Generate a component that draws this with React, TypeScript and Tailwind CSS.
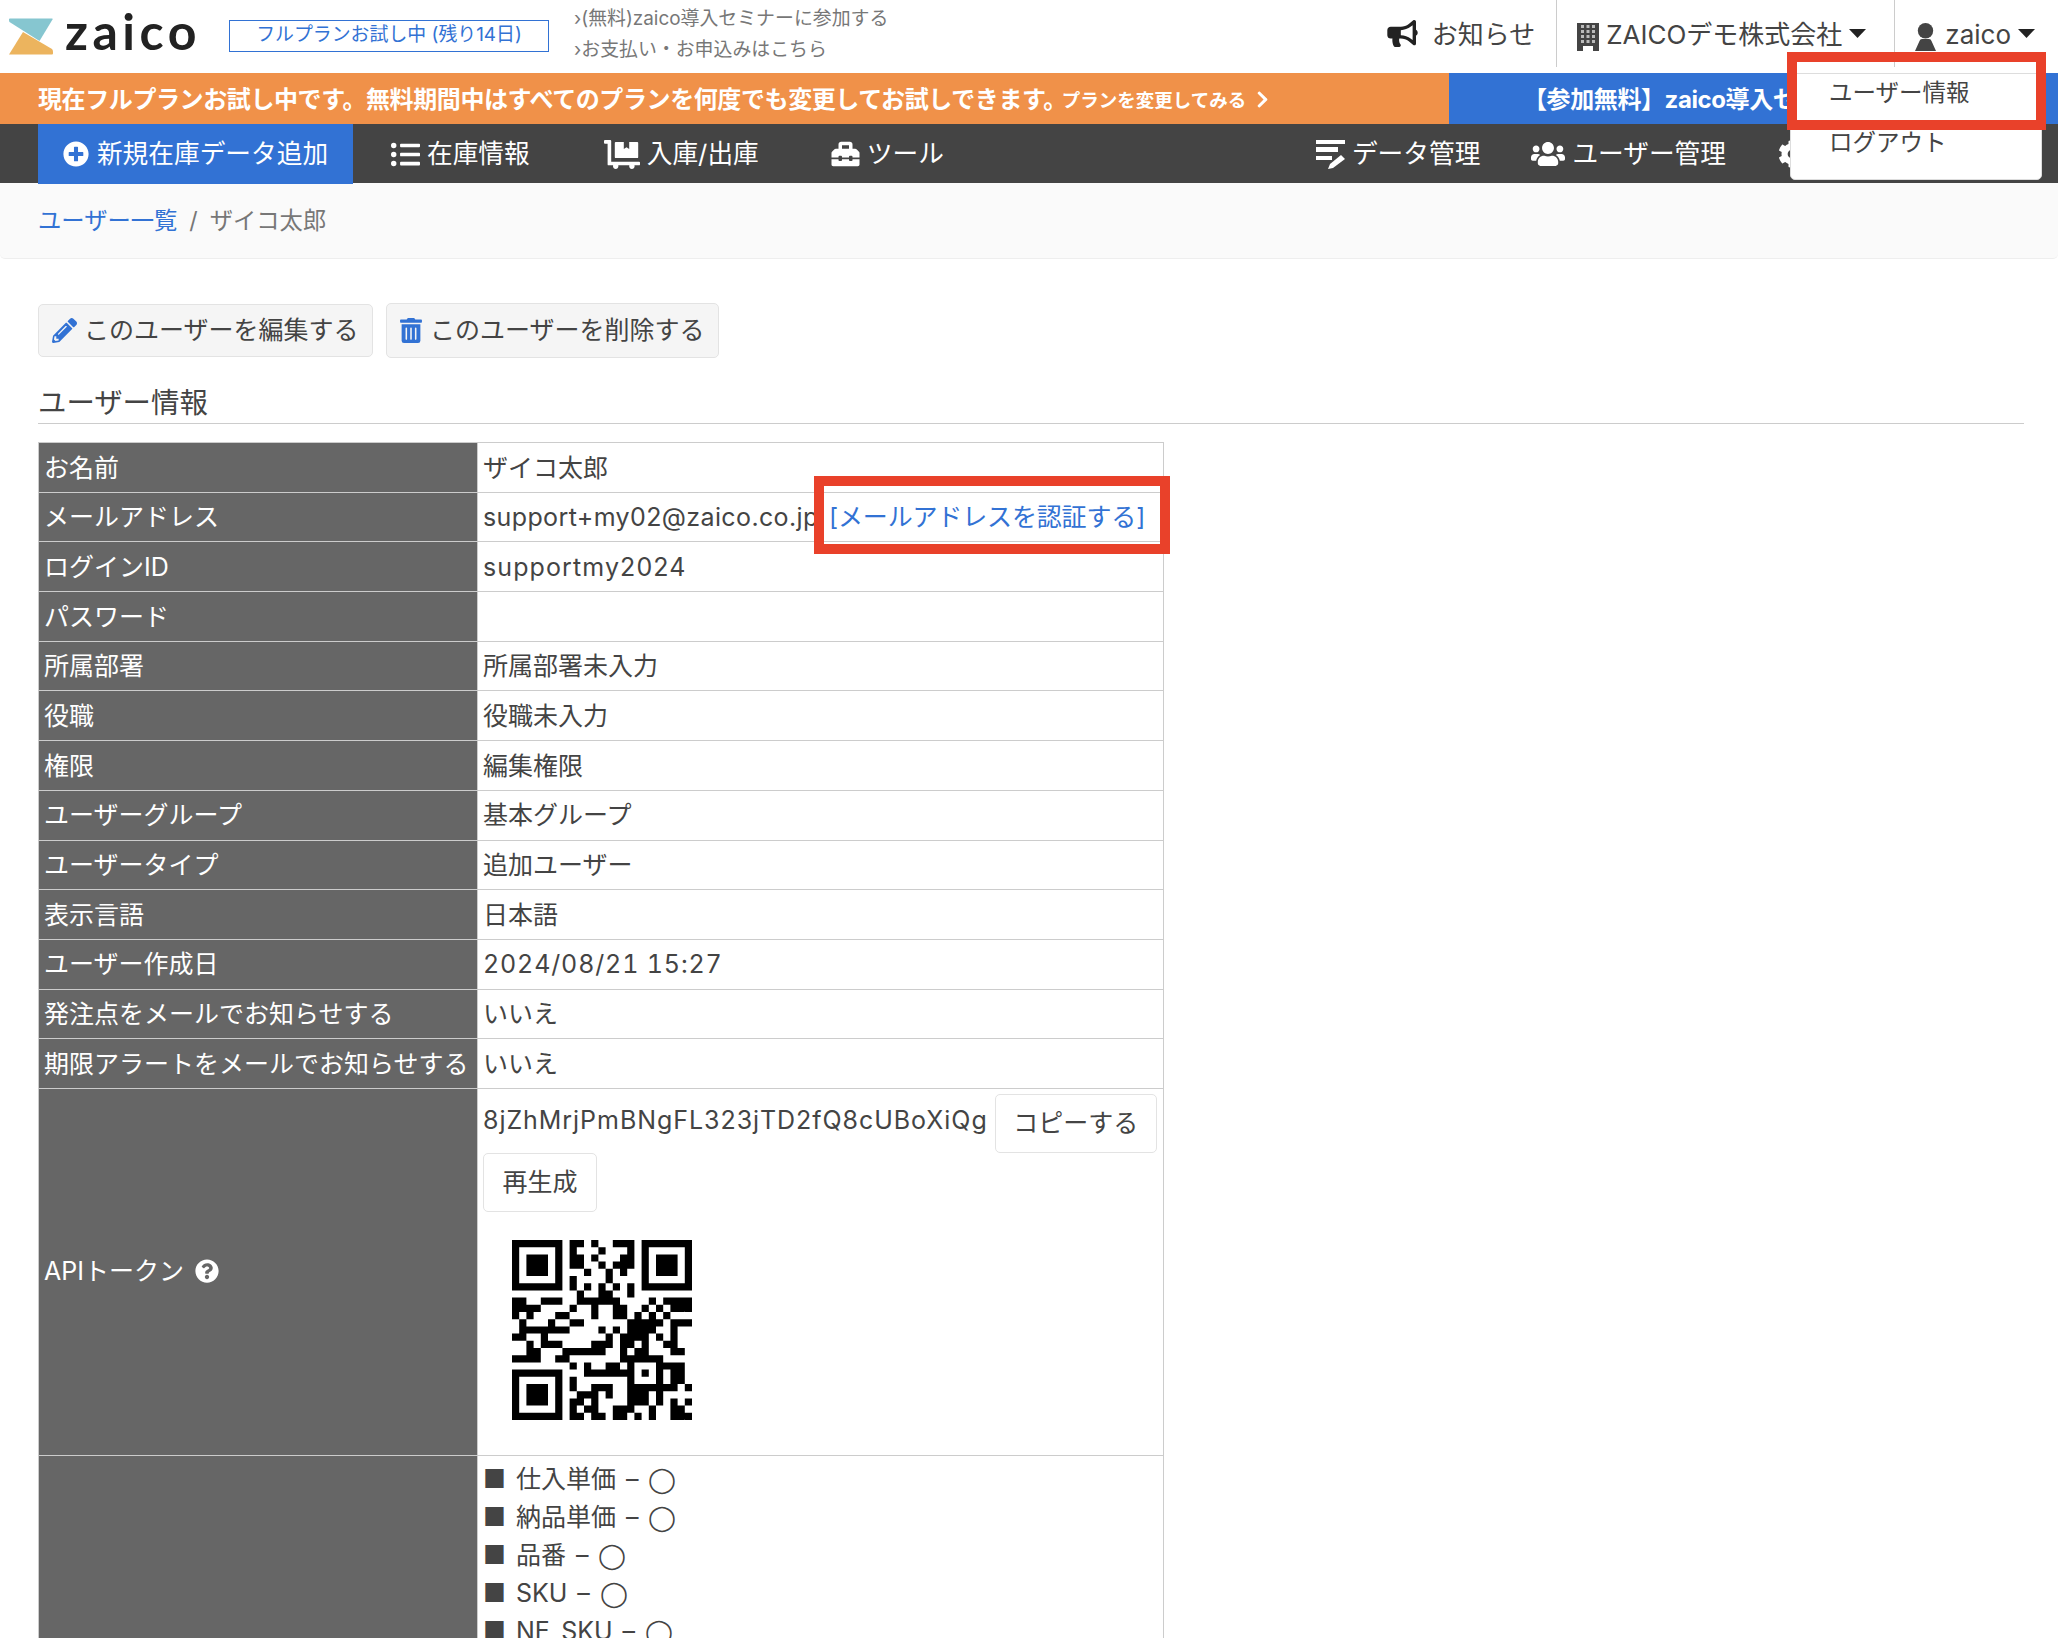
import React from "react";
import {
  FaBullhorn,
  FaChevronRight,
  FaCog,
  FaDollyFlatbed,
  FaListUl,
  FaPencilAlt,
  FaPlusCircle,
  FaQuestionCircle,
  FaToolbox,
  FaTrashAlt,
  FaUsers,
} from "react-icons/fa";

const qrRows = [
  "#######.##.#..###.#######",
  "#.....#.#...#...#.#.....#",
  "#.###.#.##.#...##.#.###.#",
  "#.###.#.##..#.###.#.###.#",
  "#.###.#...#..#.#..#.###.#",
  "#.....#.#....#....#.....#",
  "#######.#.#.#.#.#.#######",
  ".........#..##..#........",
  "##..###..######....#.####",
  "####....#..#..##..#.#.###",
  "#.#...##...#..##.#.#.#...",
  ".#...#..##......#####.###",
  ".#######....#.#.####..#..",
  "##..#........#.####.#.#..",
  "..#.###....###.##.#..##..",
  "..##...######..#.##...##.",
  "####..##.......######....",
  "........#.#..##.#...####.",
  "#######...#######.#.#.##.",
  "#.....#.#.......#...#.##.",
  "#.###.#.#..###..#######.#",
  "#.###.#..###.#..###.#....",
  "#.###.#.##.#....###.#.#.#",
  "#.....#.#.##..###..#..##.",
  "#######.##.##.##.#.#..###",
];

const qrPath = qrRows
  .flatMap((row, y) =>
    row.split("").map((c, x) => (c === "#" ? `M${x} ${y}h1v1h-1z` : "")),
  )
  .join("");

const infoRows = [
  ["お名前", "ザイコ太郎", ""],
  ["メールアドレス", "email", ""],
  ["ログインID", "supportmy2024", "tracking-[1.100px]"],
  ["パスワード", "", ""],
  ["所属部署", "所属部署未入力", ""],
  ["役職", "役職未入力", ""],
  ["権限", "編集権限", ""],
  ["ユーザーグループ", "基本グループ", ""],
  ["ユーザータイプ", "追加ユーザー", ""],
  ["表示言語", "日本語", ""],
  ["ユーザー作成日", "2024/08/21 15:27", "tabular-nums tracking-[0.850px]"],
  ["発注点をメールでお知らせする", "いいえ", ""],
  ["期限アラートをメールでお知らせする", "いいえ", ""],
];

const permissions = ["仕入単価", "納品単価", "品番", "SKU", "NE_SKU"];

function Logo() {
  return (
    <div className="ml-[9px] flex items-center">
      <svg width="44" height="37" viewBox="0 0 44 37">
        <path d="M1 .5h42q1 0 .5 1L30.5 23 .5 4Q0 3.5 0 2V1q0-.5 1-.5z" fill="#86c6d0" />
        <path d="M14 14l29 17q1 1 1 3v1.500q0 1-1 1H0z" fill="#ecb45e" />
      </svg>
      <span className="-mt-[12px] ml-[12px] w-[132px] text-[50px] leading-none font-bold tracking-[4.500px] text-[#222] [font-family:Lato,sans-serif]">
        zaico
      </span>
    </div>
  );
}

function PersonIcon() {
  return (
    <svg className="mt-[7px]" width="21" height="28" viewBox="0 0 21 28" fill="#444">
      <circle cx="10.500" cy="7.700" r="7.700" />
      <path d="M7 16h7q2 0 2.500 2L21 28H0l4.500-10Q5 16 7 16z" />
    </svg>
  );
}

function BuildingIcon() {
  const windows = [2, 7, 12, 17];
  return (
    <svg className="mt-[7px]" width="22" height="28" viewBox="0 0 22 28">
      <path d="M0 0h22v28h-6v-5H6v5H0z" fill="#444" />
      <g fill="#bbb">
        {windows.map((y) => (
          <React.Fragment key={y}>
            <rect x="4" y={y} width="3" height="3" />
            <rect x="9.500" y={y} width="3" height="3" />
            <rect x="15" y={y} width="3" height="3" />
          </React.Fragment>
        ))}
      </g>
    </svg>
  );
}

function Caret() {
  return (
    <svg className="ml-[7px]" width="17" height="9" viewBox="0 0 17 9" fill="#222">
      <path d="M0 0h17l-8.500 9z" />
    </svg>
  );
}

function DataIcon() {
  return (
    <svg width="29" height="30" viewBox="0 0 29 30" fill="#fff">
      <rect x="0" y="1" width="29" height="4" />
      <rect x="0" y="8" width="22" height="5" />
      <rect x="0" y="17" width="16" height="4" />
      <path d="M25 16l4 4-12 9-5 1 2-5z" />
    </svg>
  );
}

function NavItem({ icon, label, className }: { icon: React.ReactNode; label: string; className: string }) {
  return (
    <div className={`mt-[1px] flex items-center gap-[7px] ${className}`}>
      {icon}
      <span>{label}</span>
    </div>
  );
}

export default function App() {
  return (
    <div className="relative h-[1638px] w-[2058px] overflow-hidden bg-white text-[25px] leading-[1.5] text-[#444] [font-family:Inter,'Noto_Sans_CJK_JP',sans-serif]">
      {/* Header */}
      <header className="flex h-[73px] items-center">
        <Logo />
        <div className="-mt-[2px] ml-[32px] flex h-[32px] w-[320px] items-center justify-center border border-[#3272d4] text-[18.900px] leading-none text-[#3272d4]">
          フルプランお試し中 (残り14日)
        </div>
        <div className="-mt-[6px] ml-[25px] flex flex-col gap-[12px] text-[18.900px] leading-[19px] text-[#777]">
          <span>›(無料)zaico導入セミナーに参加する</span>
          <span>›お支払い・お申込みはこちら</span>
        </div>
        <div className="mr-[23px] ml-auto flex h-full items-start text-[26px]">
          <div className="flex h-[67px] items-center gap-[14px] pr-[21px]">
            <FaBullhorn className="h-[27px] w-[31px] text-[#222]" />
            <span className="mt-[2px]">お知らせ</span>
          </div>
          <div className="flex h-[67px] items-center border-l border-[#ccc] pr-[28px] pl-[20px]">
            <BuildingIcon />
            <span className="mt-[2px] ml-[7px]">ZAICOデモ株式会社</span>
            <Caret />
          </div>
          <div className="flex h-[67px] items-center border-l border-[#ccc] pl-[20px]">
            <PersonIcon />
            <span className="mt-[2px] ml-[9px]">zaico</span>
            <Caret />
          </div>
        </div>
      </header>

      {/* Banners */}
      <div className="flex h-[51px] font-bold text-white">
        <div className="flex w-[1449px] items-center bg-[#f09149] pt-[2px] pl-[38px] text-[24px] tracking-[-0.400px]">
          <span>現在フルプランお試し中です。無料期間中はすべてのプランを何度でも変更してお試しできます。</span>
          <span className="mt-[2px] -ml-[5px] text-[18.500px] tracking-normal">プランを変更してみる</span>
          <FaChevronRight className="ml-[10px] h-[19px] w-[13px]" />
        </div>
        <div className="flex flex-1 items-center bg-[#3272d4] pt-[2px] pl-[74px] text-[24px] tracking-[-0.400px]">【参加無料】zaico導入セミナー</div>
      </div>

      {/* Nav */}
      <nav className="flex h-[59px] bg-[#444] text-[25.700px] text-white">
        <div className="ml-[38px] flex h-[60px] w-[315px] items-center justify-center gap-[8px] bg-[#3272d4]">
          <FaPlusCircle className="h-[26px] w-[26px]" />
          <span>新規在庫データ追加</span>
        </div>
        <NavItem className="ml-[38px]" icon={<FaListUl className="h-[29px] w-[29px]" />} label="在庫情報" />
        <NavItem className="ml-[74px]" icon={<FaDollyFlatbed className="h-[29px] w-[36px]" />} label="入庫/出庫" />
        <NavItem className="ml-[72px]" icon={<FaToolbox className="h-[28px] w-[29px]" />} label="ツール" />
        <div className="mr-[252px] ml-auto flex items-center">
          <NavItem className="" icon={<DataIcon />} label="データ管理" />
          <NavItem className="ml-[51px]" icon={<FaUsers className="h-[28px] w-[34px]" />} label="ユーザー管理" />
          <FaCog className="ml-[52px] h-[28px] w-[28px]" />
        </div>
      </nav>

      {/* Breadcrumb */}
      <div className="flex h-[76px] items-center gap-[12px] rounded-b-[5px] border-b border-[#eee] bg-[#fafafa] px-[38px] pt-[2px] text-[23.300px] text-[#777]">
        <span className="text-[#3272d4]">ユーザー一覧</span>
        <span>/</span>
        <span>ザイコ太郎</span>
      </div>

      <main className="pr-[34px] pl-[38px]">
        <div className="mt-[44px] flex items-center gap-[13px]">
          <button className="flex h-[53px] w-[335px] items-center gap-[7px] rounded-[5px] border border-[#e3e3e3] bg-[#f5f5f5] pl-[13px]">
            <FaPencilAlt className="h-[25px] w-[25px] text-[#3272d4]" />
            <span>このユーザーを編集する</span>
          </button>
          <button className="flex h-[55px] w-[333px] items-center gap-[8px] rounded-[5px] border border-[#e3e3e3] bg-[#f5f5f5] pl-[13px]">
            <FaTrashAlt className="h-[25px] w-[22px] text-[#3272d4]" />
            <span>このユーザーを削除する</span>
          </button>
        </div>

        <h2 className="mt-[23px] h-[43px] border-b border-[#ccc] text-[28.400px] leading-[44px]">ユーザー情報</h2>

        <table className="mt-[18px] w-[1126px] table-fixed border-collapse">
          <tbody>
            {infoRows.map(([label, value, extra]) => (
              <tr key={label} className="h-[49.700px]">
                <th className="w-[439px] border border-[#ccc] bg-[#666] px-[5px] pt-[2px] text-left font-normal whitespace-nowrap text-white">
                  {label}
                </th>
                <td className={`border border-[#ccc] px-[5px] pt-[2px] whitespace-nowrap ${extra}`}>
                  {value === "email" ? (
                    <div className="relative">
                      <span className="tracking-[0.380px]">support+my02@zaico.co.jp</span>
                      <span className="absolute top-0 left-[346px] tracking-[-0.150px] text-[#3272d4]">[メールアドレスを認証する]</span>
                    </div>
                  ) : (
                    value
                  )}
                </td>
              </tr>
            ))}
            <tr className="h-[367px]">
              <th className="border border-[#ccc] bg-[#666] px-[5px] text-left font-normal text-white">
                <div className="flex items-center gap-[11px]">
                  <span>APIトークン</span>
                  <FaQuestionCircle className="-mt-[1px] h-[24px] w-[24px]" />
                </div>
              </th>
              <td className="border border-[#ccc] px-[5px] align-top">
                <div className="mt-[5px] flex items-center gap-[7px] whitespace-nowrap">
                  <span className="-mt-[5px] tracking-[0.950px]">8jZhMrjPmBNgFL323jTD2fQ8cUBoXiQg</span>
                  <button className="h-[59px] w-[162px] shrink-0 rounded-[5px] border border-[#e3e3e3]">コピーする</button>
                </div>
                <button className="block h-[59px] w-[114px] rounded-[5px] border border-[#e3e3e3]">再生成</button>
                <svg className="mt-[28px] ml-[29px]" width="180" height="180" viewBox="0 0 25 25" fill="#000">
                  <path d={qrPath} />
                </svg>
              </td>
            </tr>
            <tr>
              <th className="border border-[#ccc] bg-[#666]" />
              <td className="border border-[#ccc] px-[5px] pt-[4px] align-top leading-[38px]">
                {permissions.map((p) => (
                  <div key={p} className="h-[38px] whitespace-pre">
                    <span className="mr-[3px]">■</span> {p}
                    <span className="px-[10px]">–</span>
                    <span className="[font-family:'Liberation_Sans',sans-serif]">◯</span>
                  </div>
                ))}
              </td>
            </tr>
          </tbody>
        </table>
      </main>

      {/* Account dropdown */}
      <div className="absolute top-[73px] left-[1790px] h-[107px] w-[252px] rounded-b-[5px] border border-[#ddd] bg-white pl-[38px] text-[23.500px] leading-[38px]">
        <div>ユーザー情報</div>
        <div className="mt-[12px]">ログアウト</div>
      </div>

      {/* Annotations */}
      <div className="absolute top-[52px] left-[1787px] h-[78px] w-[259px] border-10 border-[#e9412a]" />
      <div className="absolute top-[476px] left-[814px] h-[78px] w-[356px] border-10 border-[#e9412a]" />
    </div>
  );
}
